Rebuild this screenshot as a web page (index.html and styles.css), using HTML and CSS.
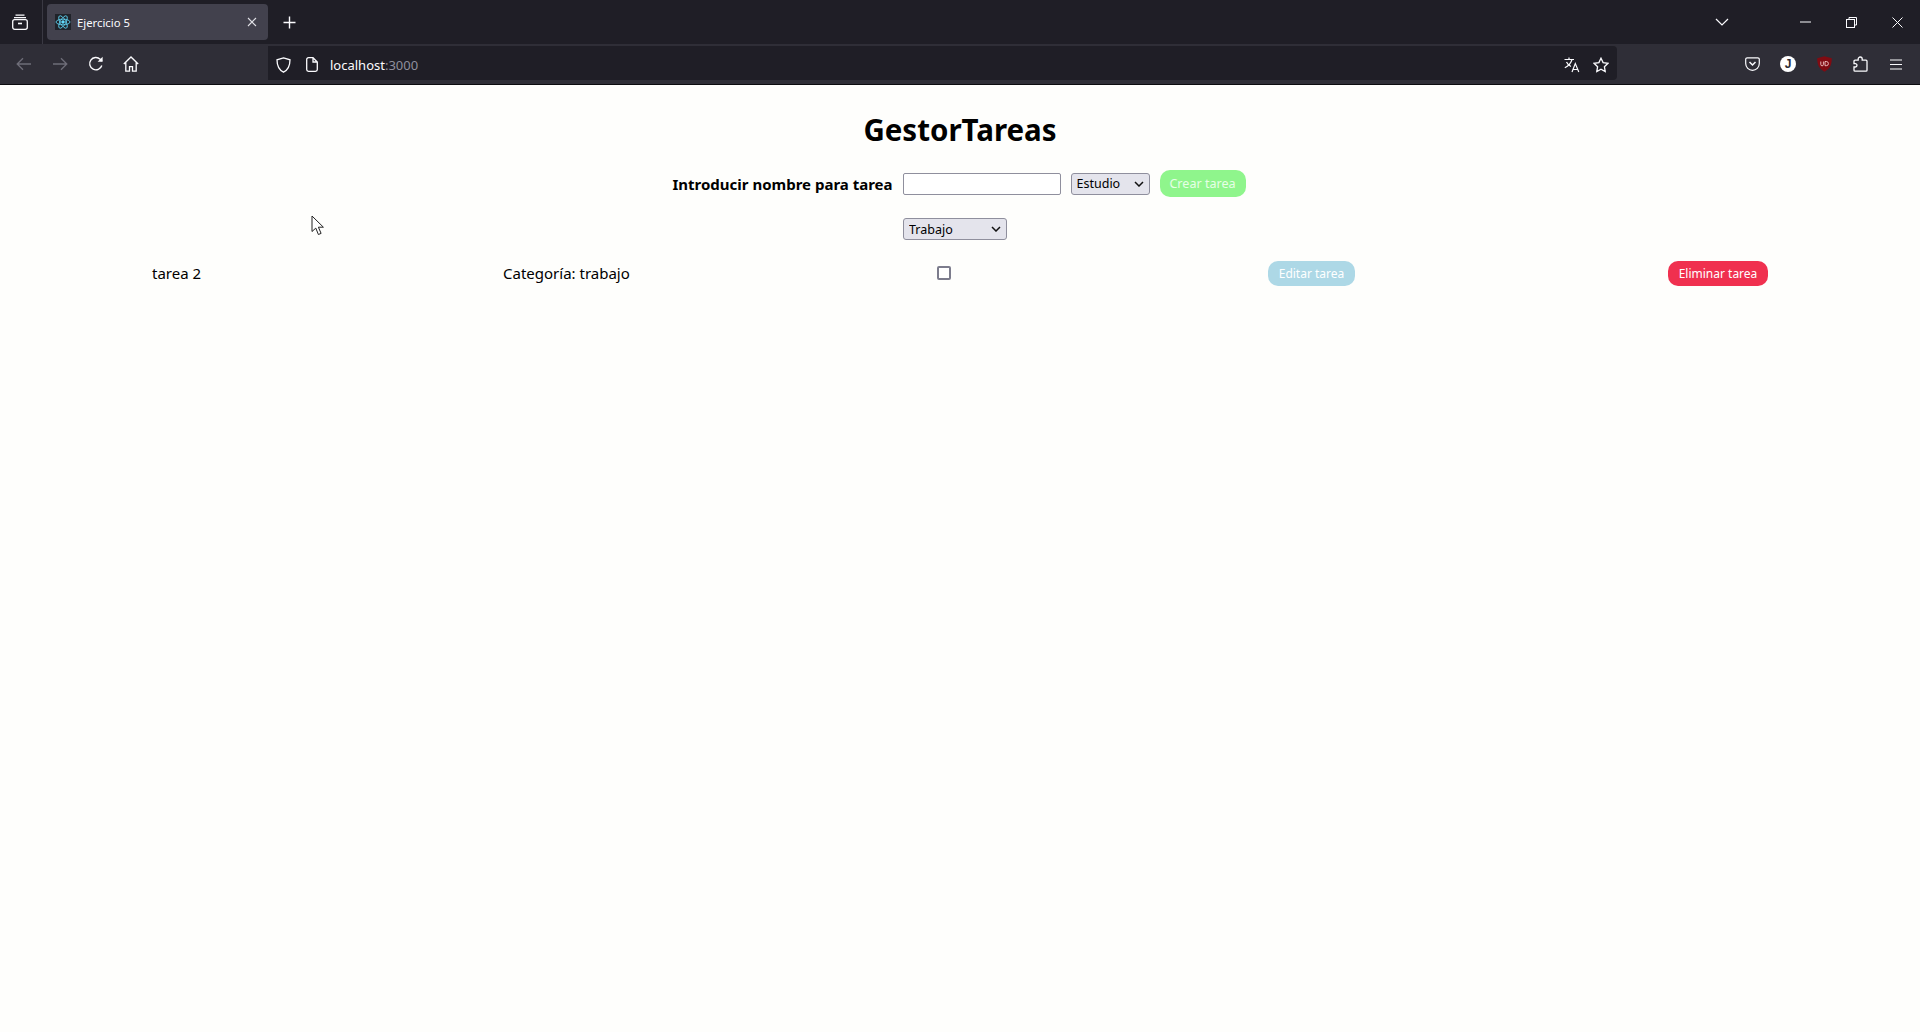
FILE: index.html
```html
<!DOCTYPE html>
<html>
<head>
	<meta charset="utf-8" />
	<title>Ejercicio 5</title>
	<link rel="stylesheet" href="styles.css">
</head>
<body>
<div id="browser">
	<div id="tabbar">
		<div class="tabs-btn">
			<svg width="16" height="16" viewBox="0 0 16 16" fill="none" stroke="#fbfbfe" stroke-width="1.3"><path d="M3.5 1.2h9M2 3.7h12"/><rect x="0.7" y="5.7" width="14.6" height="9.6" rx="2"/><path d="M6 9.5h4" stroke-width="1.6"/></svg>
		</div>
		<div class="tab-sep"></div>
		<div class="tab">
			<div class="favicon">
				<svg width="16" height="16" viewBox="0 0 16 16" fill="none" stroke="#61dafb" stroke-width="0.8"><ellipse cx="8" cy="8" rx="7" ry="2.8"/><ellipse cx="8" cy="8" rx="7" ry="2.8" transform="rotate(60 8 8)"/><ellipse cx="8" cy="8" rx="7" ry="2.8" transform="rotate(120 8 8)"/><circle cx="8" cy="8" r="1.3" fill="#61dafb"/></svg>
			</div>
			<span class="tab-title">Ejercicio 5</span>
			<svg class="tab-close" width="10" height="10" viewBox="0 0 10 10" stroke="#e0e0e6" stroke-width="1.1"><path d="M1 1l8 8M9 1l-8 8"/></svg>
		</div>
		<div class="new-tab">
			<svg width="13" height="13" viewBox="0 0 13 13" stroke="#fbfbfe" stroke-width="1.4"><path d="M6.5 0.5v12M0.5 6.5h12"/></svg>
		</div>
		<div class="tab-space"></div>
		<div class="win-btn list-btn">
			<svg width="14" height="8" viewBox="0 0 14 8" fill="none" stroke="#fbfbfe" stroke-width="1.2"><path d="M1 1l6 6 6-6"/></svg>
		</div>
		<div class="win-btn">
			<svg width="11" height="2" viewBox="0 0 11 2" stroke="#fbfbfe"><path d="M0 1h11"/></svg>
		</div>
		<div class="win-btn">
			<svg width="11" height="11" viewBox="0 0 11 11" fill="none" stroke="#fbfbfe"><rect x="0.5" y="2.5" width="8" height="8"/><path d="M3 2.5v-2h7.5v7.5h-2"/></svg>
		</div>
		<div class="win-btn">
			<svg width="11" height="11" viewBox="0 0 11 11" stroke="#fbfbfe"><path d="M0.5 0.5l10 10M10.5 0.5l-10 10"/></svg>
		</div>
	</div>
	<div id="navbar">
		<div class="nav-btn">
			<svg width="16" height="14" viewBox="0 0 16 14" fill="none" stroke="#6e6d78" stroke-width="1.3"><path d="M15 7H1.5M7 1.2L1.2 7 7 12.8"/></svg>
		</div>
		<div class="nav-btn">
			<svg width="16" height="14" viewBox="0 0 16 14" fill="none" stroke="#6e6d78" stroke-width="1.3"><path d="M1 7h13.500M9 1.200L14.800 7 9 12.800"/></svg>
		</div>
		<div class="nav-btn">
			<svg width="16" height="16" viewBox="0 0 16 16" fill="none" stroke="#fbfbfe" stroke-width="1.4"><path d="M13.800 9.500A6.200 6.200 0 1 1 12.200 3.200L14 5"/><path d="M14.600 0.800v5h-5" stroke="none" fill="#fbfbfe"/></svg>
		</div>
		<div class="nav-btn home-btn">
			<svg width="16" height="16" viewBox="0 0 16 16" fill="none" stroke="#fbfbfe" stroke-width="1.3"><path d="M0.800 8L8 1l7.200 7M2.800 6.500v8.700h3.700v-4.500h3v4.500h3.700V6.500"/></svg>
		</div>
		<div class="nav-gap"></div>
		<div id="urlbar">
			<svg class="shield" width="15" height="16" viewBox="0 0 15 16" fill="none" stroke="#fbfbfe" stroke-width="1.3"><path d="M7.500 0.900L14 2.800c0 6-1.600 10-6.500 12.400C2.600 12.800 1 8.800 1 2.800z"/></svg>
			<svg class="page" width="12" height="15" viewBox="0 0 12 15" fill="none" stroke="#fbfbfe" stroke-width="1.3"><path d="M7 0.700H2.500A1.800 1.800 0 0 0 0.700 2.500v10a1.800 1.800 0 0 0 1.800 1.800h7a1.800 1.800 0 0 0 1.800-1.800V5zM7 0.700V5h4.300"/></svg>
			<span class="url-host">localhost</span><span class="url-port">:3000</span>
			<span class="url-space"></span>
			<svg class="translate" width="17" height="16" viewBox="0 0 17 16" fill="none" stroke="#fbfbfe" stroke-width="1.2"><path d="M0.500 2.500h9.500M5 0.500v2M8 2.500C7 6 4.500 9 0.800 10.800M2.500 5c1 2.200 2.500 3.500 4.500 4.500M8 15l3.300-8.500L14.800 15M9.200 12.500h4.500"/></svg>
			<svg class="star" width="16" height="16" viewBox="0 0 16 16" fill="none" stroke="#fbfbfe" stroke-width="1.3"><path d="M8 1.200l2.100 4.400 4.800 0.700-3.500 3.400 0.800 4.800L8 12.200l-4.200 2.300 0.800-4.800L1.100 6.300l4.800-0.700z"/></svg>
		</div>
		<div class="nav-right">
			<div class="nav-btn">
				<svg width="15" height="14" viewBox="0 0 15 14" fill="none" stroke="#fbfbfe" stroke-width="1.2"><path d="M2.200 0.800h10.600a1.500 1.500 0 0 1 1.500 1.500V6.500a6.800 6.800 0 0 1-13.600 0V2.300a1.500 1.500 0 0 1 1.500-1.500z"/><path d="M4.500 5l3 3 3-3" stroke-width="1.5"/></svg>
			</div>
			<div class="nav-btn">
				<span class="avatar">J</span>
			</div>
			<div class="nav-btn">
				<svg width="15" height="16" viewBox="0 0 15 16"><path d="M7.500 0.300L14.800 2.300c0 6.500-2 10.800-7.300 13.400C2.200 13.100 0.200 8.800 0.200 2.300z" fill="#800b12"/><path d="M3.800 5.500v3a1.300 1.300 0 0 0 2.600 0v-3M8 5.500v4.200h1.300a2.100 2.100 0 0 0 0-4.200z" fill="none" stroke="#f2c7c7" stroke-width="0.9"/></svg>
			</div>
			<div class="nav-btn">
				<svg width="15" height="16" viewBox="0 0 15 16" fill="none" stroke="#fbfbfe" stroke-width="1.3"><path d="M5.800 15.200H2a1 1 0 0 1-1-1v-3.200h1.300a1.700 1.700 0 0 0 0-3.400H1V5.200a1 1 0 0 1 1-1h3.200V3a2 2 0 0 1 4 0v1.200H13a1 1 0 0 1 1 1v9a1 1 0 0 1-1 1z"/></svg>
			</div>
			<div class="nav-btn">
				<svg width="12" height="11" viewBox="0 0 12 11" stroke="#fbfbfe" stroke-width="1.2"><path d="M0 1h12M0 5.500h12M0 10h12"/></svg>
			</div>
		</div>
	</div>
</div>
<div id="main">
	<h1 class="title">GestorTareas</h1>
	<div class="form-row">
		<label class="form-label">Introducir nombre para tarea</label>
		<input type="text" class="task-input" />
		<select class="cat-select"><option>Estudio</option></select>
		<button class="btn btn-create">Crear tarea</button>
	</div>
	<div class="filter-row">
		<select class="filter-select"><option>Trabajo</option></select>
	</div>
	<div class="task-row">
		<span class="task-text">tarea 2</span>
		<span class="task-text">Categoría: trabajo</span>
		<input type="checkbox" class="task-check" />
		<button class="btn btn-edit">Editar tarea</button>
		<button class="btn btn-delete">Eliminar tarea</button>
	</div>
	<svg class="cursor" width="14" height="21" viewBox="0 0 14 21"><path d="M1 1v15.500l3.800-3.400 2.600 6.400 2.700-1.100-2.700-6.200h5z" fill="#fff" stroke="#222" stroke-width="1"/></svg>
</div>
</body>
</html>
```

FILE: styles.css
```css
html, body {
	margin: 0;
	height: 100%;
}
body {
	background-color: #fefefc;
	font-family: "Noto Sans", "Liberation Sans", sans-serif;
	color: #000;
	overflow: hidden;
}
svg {
	display: block;
}

/* browser chrome */
#browser {
	height: 85px;
	border-bottom: 1px solid #0c0c10;
	box-sizing: border-box;
}
#tabbar {
	display: flex;
	align-items: center;
	height: 44px;
	background-color: #1f1e26;
}
.tabs-btn {
	width: 42px;
	display: flex;
	justify-content: center;
	padding-right: 2px;
	box-sizing: border-box;
}
.tab-sep {
	width: 1px;
	height: 44px;
	background-color: #3a3943;
}
.tab {
	display: flex;
	align-items: center;
	width: 221px;
	height: 36px;
	margin-left: 4px;
	padding: 0 11px 0 8px;
	box-sizing: border-box;
	border-radius: 4px;
	background-color: #42414d;
}
.favicon {
	background-color: #20232a;
	margin-right: 6px;
}
.tab-title {
	flex: 1;
	font-size: 11.3px;
	color: #fbfbfe;
}
.new-tab {
	width: 42px;
	display: flex;
	justify-content: center;
}
.tab-space {
	flex: 1;
}
.win-btn {
	width: 46px;
	display: flex;
	justify-content: center;
}
.list-btn {
	margin-right: 37px;
	width: 46px;
}
#navbar {
	display: flex;
	align-items: center;
	height: 40px;
	padding: 0 6px;
	background-color: #2f2e37;
}
.nav-btn {
	width: 36px;
	display: flex;
	justify-content: center;
	align-items: center;
}
.home-btn {
	padding-right: 2px;
	box-sizing: border-box;
}
.nav-gap {
	width: 118px;
}
#urlbar {
	display: flex;
	align-items: center;
	width: 1349px;
	height: 34px;
	margin-bottom: 2px;
	padding: 3px 8px 0;
	box-sizing: border-box;
	border-radius: 0 4px 4px 0;
	background-color: #1f1e26;
	font-size: 13px;
}
.page {
	margin-left: 15px;
	margin-right: 12px;
}
.url-host {
	color: #fbfbfe;
}
.url-port {
	color: #8f8f9d;
}
.url-space {
	flex: 1;
}
.star {
	margin-left: 12px;
}
.nav-right {
	display: flex;
	margin-left: auto;
}
.avatar {
	width: 16px;
	height: 16px;
	border-radius: 50%;
	background-color: #fff;
	color: #2b2a33;
	font-family: "Liberation Sans", sans-serif;
	font-size: 12px;
	font-weight: bold;
	line-height: 16px;
	text-align: center;
}

/* page */
#main {
	position: relative;
}
.title {
	margin: 0;
	padding-top: 23px;
	font-size: 29.5px;
	line-height: 44px;
	text-align: center;
}
.form-row {
	display: flex;
	justify-content: center;
	align-items: center;
	gap: 10px;
	margin-top: 18px;
	padding-right: 2px;
}
.form-label {
	font-size: 15px;
	font-weight: bold;
}
.task-input {
	width: 158px;
	height: 22px;
	padding: 0 4px;
	box-sizing: border-box;
	border: 1px solid #8f8f9d;
	border-radius: 2px;
	background-color: #fff;
}
.cat-select, .filter-select {
	height: 22px;
	padding: 0 0 0 5px;
	box-sizing: border-box;
	border: 1px solid #8f8f9d;
	border-radius: 3px;
	appearance: none;
	background-color: #e4e4ec;
	background-image: url("data:image/svg+xml,%3Csvg xmlns='http://www.w3.org/2000/svg' width='10' height='6'%3E%3Cpath d='M1 1l4 4 4-4' fill='none' stroke='%23111' stroke-width='1.5'/%3E%3C/svg%3E");
	background-repeat: no-repeat;
	background-position: right 5px center;
	font-family: "Noto Sans", sans-serif;
	font-size: 12.5px;
	color: #000;
}
.cat-select {
	width: 79px;
}
.filter-select {
	width: 104px;
}
.btn {
	height: 25px;
	padding: 0;
	border: none;
	border-radius: 10px;
	font-family: "Noto Sans", sans-serif;
	font-size: 12px;
	color: #fff;
}
.btn-create {
	width: 86px;
	height: 27px;
	background-color: #8ff58c;
	font-size: 12.6px;
	color: #e6ffe6;
}
.filter-row {
	display: flex;
	justify-content: center;
	padding-right: 10px;
	margin-top: 21px;
}
.task-row {
	display: grid;
	grid-template-columns: 351px 434px 331px 400px 100px;
	align-items: center;
	margin-top: 21px;
	padding-left: 152px;
	font-size: 15px;
}
.task-text {
	margin-bottom: 2px;
}
.task-check {
	appearance: none;
	width: 14px;
	height: 14px;
	margin: 0 0 2px;
	border: 2px solid #7c7c8c;
	border-radius: 2px;
	background-color: #fff;
}
.btn-edit {
	width: 87px;
	background-color: #add8e6;
}
.btn-delete {
	width: 100px;
	background-color: #f0304f;
}
.cursor {
	position: absolute;
	left: 311px;
	top: 130px;
}
```
